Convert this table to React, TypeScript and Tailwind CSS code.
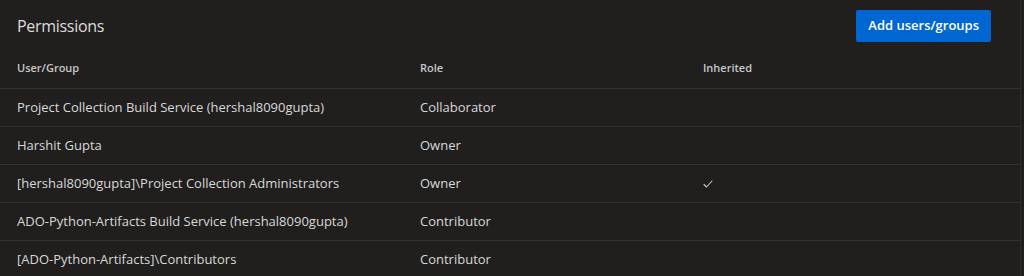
import React from 'react';

const rows = [
  { name: 'Project Collection Build Service (hershal8090gupta)', role: 'Collaborator', inherited: false },
  { name: 'Harshit Gupta', role: 'Owner', inherited: false },
  { name: '[hershal8090gupta]\\Project Collection Administrators', role: 'Owner', inherited: true },
  { name: 'ADO-Python-Artifacts Build Service (hershal8090gupta)', role: 'Contributor', inherited: false },
  { name: '[ADO-Python-Artifacts]\\Contributors', role: 'Contributor', inherited: false },
];

function Check() {
  return (
    <svg width="10" height="8" viewBox="0 0 10 8" fill="none" className="text-[#c8c8c8]">
      <path d="M1 4.5 L3.5 7 L9 1" stroke="currentColor" strokeWidth="1.1" strokeLinecap="round" strokeLinejoin="round" />
    </svg>
  );
}

export default function App() {
  return (
    <div className="w-[1024px] h-[276px] overflow-hidden bg-[#201f1e] font-['Open_Sans',sans-serif] text-[#d8d8d8]">
      <div className="w-[1021px] h-full border-r border-[#2c2b2a]">
        {/* Title bar */}
        <div className="flex items-center justify-between pl-[17px] pr-[29px] pt-[10px]">
          <h1 className="text-[16px] tracking-[-0.3px] leading-8 text-[#dcdcdc]">Permissions</h1>
          <button className="h-8 px-3 rounded-[2px] bg-[#0066d1] text-white text-[13px] font-semibold">
            Add users/groups
          </button>
        </div>

        {/* Header */}
        <div className="grid grid-cols-[403px_283px_1fr] pl-[17px] h-[47px] pt-[7px] items-center border-b border-[#343231] text-[11px] font-semibold text-[#c8c8c8]">
          <span>User/Group</span>
          <span>Role</span>
          <span>Inherited</span>
        </div>

        {rows.map((r) => (
          <div
            key={r.name}
            className="grid grid-cols-[403px_283px_1fr] pl-[17px] h-[38px] items-center border-b border-[#343231] text-[13px]"
          >
            <span>{r.name}</span>
            <span>{r.role}</span>
            <span className="flex items-center">{r.inherited && <Check />}</span>
          </div>
        ))}
      </div>
    </div>
  );
}
